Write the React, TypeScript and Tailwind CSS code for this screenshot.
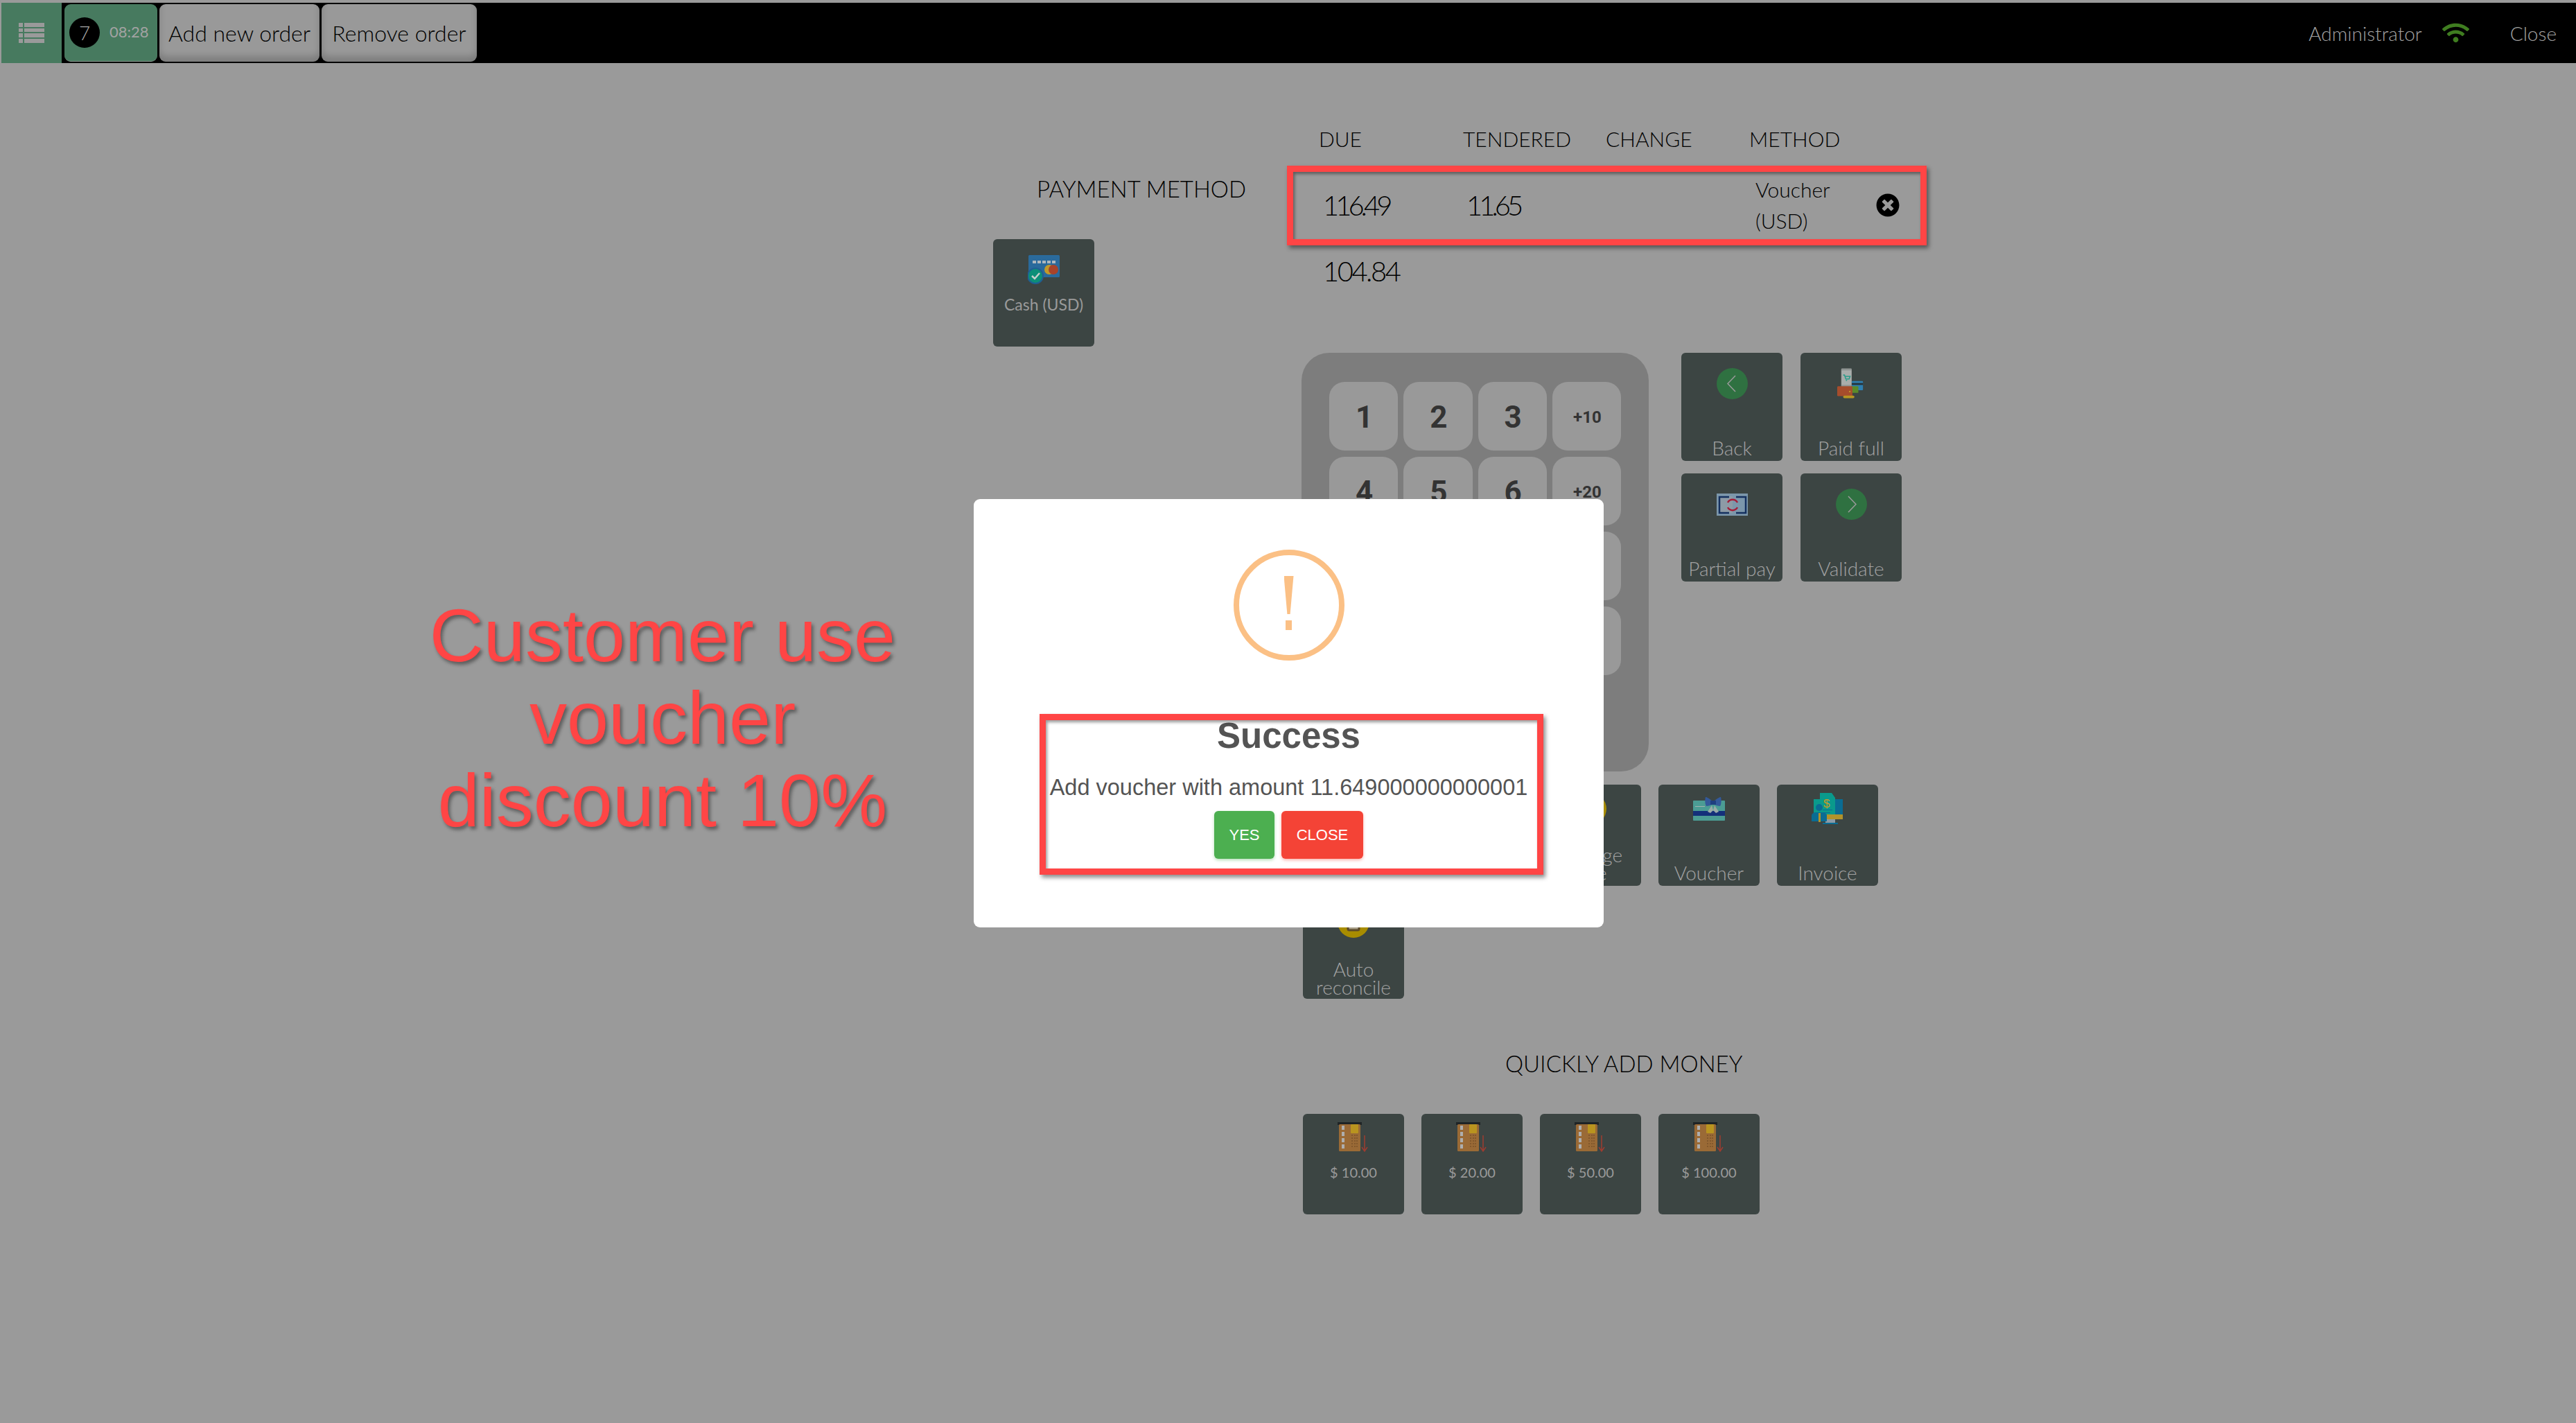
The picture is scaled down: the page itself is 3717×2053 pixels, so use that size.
import React from "react";
import { FaTimesCircle, FaWifi } from "react-icons/fa";

const CardCheck = () => (
  <svg width="46" height="42" viewBox="0 0 46 42">
    <rect x="1" y="0" width="45" height="32" rx="1.5" fill="#2a6a9c" />
    <rect x="7" y="8" width="5" height="4" fill="#aeb7bd" />
    <rect x="14" y="8" width="5" height="4" fill="#aeb7bd" />
    <rect x="21" y="8" width="5" height="4" fill="#aeb7bd" />
    <rect x="28" y="8" width="5" height="4" fill="#aeb7bd" />
    <rect x="35" y="8" width="5" height="4" fill="#aeb7bd" />
    <circle cx="31" cy="21" r="7" fill="#c29a2a" />
    <circle cx="37" cy="21" r="7" fill="#a8432a" />
    <circle cx="11" cy="30" r="12" fill="#1f5f93" />
    <circle cx="11" cy="30" r="10" fill="#0d8f78" />
    <path d="M6 30l4 4 7-8" stroke="#c8d0cc" strokeWidth="2.5" fill="none" />
  </svg>
);

const PaidFull = () => (
  <svg width="40" height="45" viewBox="0 0 42 46">
    <rect x="6" y="0" width="16" height="29" rx="1.5" fill="#8f9492" />
    <rect x="6.5" y="3" width="15" height="22" fill="#a9adab" />
    <path d="M9 10h2l2 6h5l1.5-4H11.5" stroke="#2a9c8a" strokeWidth="1.6" fill="none" />
    <circle cx="14" cy="18" r="1" fill="#2a9c8a" />
    <rect x="22" y="19" width="17" height="14" rx="1" fill="#2f7fb0" />
    <rect x="22" y="22" width="17" height="3" fill="#26343a" />
    <rect x="21" y="27" width="11" height="10" rx="1" fill="#5b8a2a" />
    <rect x="0" y="27" width="23" height="15" rx="1.5" fill="#a64d2c" />
    <circle cx="19" cy="35" r="1.2" fill="#c29a2a" />
    <rect x="9" y="41" width="17" height="4" rx="2" fill="#b79622" />
  </svg>
);

const PartialIcon = () => (
  <svg width="45" height="32" viewBox="0 0 45 32" className="mt-[7px]">
    <rect width="45" height="32" fill="#7c97ab" />
    <rect x="4" y="4" width="19" height="24" fill="#8d9ba6" />
    <path d="M18 5H4v23h14M28 5h14v23H28" stroke="#14305f" strokeWidth="2.5" fill="none" />
    <path d="M16 13a8 8 0 0 1 14 0M30 20a8 8 0 0 1-14 0" stroke="#a51d38" strokeWidth="2.5" fill="none" />
  </svg>
);

const GreenCircle = ({ dir }: { dir: "left" | "right" }) => (
  <svg width="45" height="45" viewBox="0 0 45 45">
    <circle cx="22.5" cy="22.5" r="22.5" fill="#2f7141" />
    <path
      d={dir === "left" ? "M27 11L16 22.5 27 34" : "M18 11l11 11.500L18 34"}
      stroke="#9a9a9a"
      strokeWidth="1.5"
      fill="none"
    />
  </svg>
);

const GiftCard = () => (
  <svg width="46" height="35" viewBox="0 0 46 35" className="mt-[5px]">
    <rect x="0" y="6" width="46" height="29" rx="1" fill="#4b9c94" />
    <rect x="0" y="21" width="46" height="7" fill="#14307a" />
    <rect x="3" y="14" width="14" height="1" fill="#a4b4b0" />
    <path d="M29 8C22 1 18 1 18 1c-1 3-1 10 1 13 3 0 6-1 10-3 4 2 7 3 10 3 2-3 2-10 1-13 0 0-4 0-11 7z" fill="#33599a" />
    <rect x="25" y="6" width="8" height="6" fill="#1f3f80" />
    <path d="M27 13l-6 9 4 2 4-4zM31 13l6 9-4 2-4-4z" fill="#9aaaa8" />
  </svg>
);

const InvoiceIcon = () => (
  <svg width="46" height="46" viewBox="0 0 46 46">
    <rect x="30" y="9" width="15" height="26" fill="#0a6c93" />
    <path d="M3 9h9V0h17l5 7v25H3z" fill="#0a9a8c" />
    <text x="17" y="21" fontSize="17" fill="#c69a2a" fontFamily="Liberation Sans">$</text>
    <rect x="16" y="24" width="14" height="1" fill="#0a6c93" />
    <rect x="16" y="28" width="11" height="1" fill="#0a6c93" />
    <rect x="22" y="31" width="23" height="7" fill="#b1932b" />
    <rect x="20" y="38" width="14" height="6" fill="#8d9ba6" />
    <rect x="16" y="43" width="22" height="2" fill="#0a6c93" />
    <circle cx="11" cy="21" r="5" fill="#0a6c93" />
    <path d="M0 41V33c0-3 3-5 6-5h10c3 0 6 2 6 5v8z" fill="#0a6c93" />
    <rect x="10" y="29" width="3" height="13" fill="#b1932b" />
  </svg>
);

const Atm = () => (
  <svg width="46" height="44" viewBox="0 0 46 44">
    <rect x="0" y="0" width="35" height="4" fill="#1f2426" />
    <rect x="2" y="3" width="31" height="39" rx="1.5" fill="#9a6a36" />
    <rect x="6" y="5" width="4" height="6" fill="#aeaeae" />
    <rect x="6" y="14" width="4" height="6" fill="#aeaeae" />
    <rect x="6" y="23" width="4" height="6" fill="#aeaeae" />
    <rect x="6" y="32" width="4" height="6" fill="#aeaeae" />
    <rect x="19" y="3" width="11" height="13" rx="1" fill="#b9941f" />
    <path d="M21 18v20M25 18v20M28 18v20" stroke="#6b4723" strokeDasharray="2 2" />
    <path d="M39 19v23M35 36l4 6 4-6" stroke="#9e3c30" strokeWidth="1.5" fill="none" />
  </svg>
);

const CoinIcon = () => (
  <svg width="46" height="46" viewBox="0 0 46 46">
    <circle cx="23" cy="23" r="23" fill="#a88c00" />
    <rect x="15" y="17" width="16" height="18" rx="2" fill="#a9a08a" stroke="#5c4a2a" strokeWidth="3" />
  </svg>
);

const Tile = ({ icon, label, tall }: { icon?: React.ReactNode; label: React.ReactNode; tall?: boolean }) => (
  <div
    className={`flex flex-col items-center justify-between w-[146px] rounded-md bg-[#3c4543] text-[#a3a3a3] font-light text-[28px] leading-[26px] text-center pb-[6px] ${
      tall ? "h-[156px] pt-[22px]" : "h-[146px] pt-[12px]"
    }`}
  >
    <div className="flex justify-center">{icon}</div>
    <div>{label}</div>
  </div>
);

const MoneyTile = ({ amount }: { amount: string }) => (
  <div className="flex flex-col items-center w-[146px] h-[145px] rounded-md bg-[#3c4543] text-[#9a9a9a] font-normal text-[20px] leading-[26px] pt-[12px]">
    <Atm />
    <div className="mt-[15px]">{amount}</div>
  </div>
);

const Key = ({ label, small }: { label: string; small?: boolean }) => (
  <div
    className={`flex items-center justify-center h-[99px] pt-[2px] pl-[2px] rounded-[22px] bg-[#999999] text-[#333333] font-bold font-['Roboto',sans-serif] ${
      small ? "text-[24px]" : "text-[44px]"
    }`}
  >
    {label}
  </div>
);

const RedBox = ({ className }: { className: string }) => (
  <div
    className={`absolute border-[9px] border-[#ff4545] shadow-[3px_4px_6px_rgba(0,0,0,0.45),inset_2px_3px_4px_rgba(0,0,0,0.4)] pointer-events-none ${className}`}
  />
);

const TopButton = ({ label, width }: { label: string; width: string }) => (
  <div
    className={`flex items-center justify-center h-[83px] rounded-[9px] bg-[#999999] shadow-[inset_0_-8px_10px_rgba(0,0,0,0.18)] text-black font-light text-[32px] ${width}`}
  >
    {label}
  </div>
);

export default function App() {
  return (
    <div className="relative w-[3717px] h-[2053px] overflow-hidden bg-[#9a9a9a] pt-[4px] pl-[2px] font-['Lato',sans-serif]">
      {/* top bar */}
      <div className="flex items-center h-[87px] bg-black">
        <div className="flex items-center justify-center w-[87px] h-full bg-[#477a5f]">
          <svg width="37" height="29" viewBox="0 0 37 29" fill="#9a9a9a">
            <rect x="0" y="0" width="6" height="6" />
            <rect x="8" y="0" width="29" height="6" />
            <rect x="0" y="8" width="6" height="5" />
            <rect x="8" y="8" width="29" height="5" />
            <rect x="0" y="15" width="6" height="6" />
            <rect x="8" y="15" width="29" height="6" />
            <rect x="0" y="23" width="6" height="6" />
            <rect x="8" y="23" width="29" height="6" />
          </svg>
        </div>
        <div className="flex items-center gap-[14px] ml-[4px] h-[83px] w-[134px] pl-[7px] rounded-[9px] bg-[#477a5f] border-b border-[#8a9a90]">
          <div className="flex items-center justify-center w-[44px] h-[44px] rounded-full bg-black text-[#aaaaaa] font-light text-[28px]">
            7
          </div>
          <span className="text-[#a3a3a3] font-normal text-[22px] -mt-[3px]">08:28</span>
        </div>
        <div className="flex gap-[3px] ml-[3px]">
          <TopButton label="Add new order" width="w-[231px]" />
          <TopButton label="Remove order" width="w-[224px]" />
        </div>
        <div className="flex items-center ml-auto pr-[28px] text-[#a3a3a3] font-light text-[28px]">
          <span>Administrator</span>
          <FaWifi className="ml-[29px] text-[39px] text-[#3f7d20]" />
          <span className="ml-[59px]">Close</span>
        </div>
      </div>

      {/* main */}
      <div className="flex pl-[1431px]">
        {/* left column */}
        <div className="w-[445px] pt-[160px] shrink-0">
          <div className="pl-[63px] h-[42px] leading-[42px] text-[33px] font-light text-black whitespace-nowrap">
            PAYMENT METHOD
          </div>
          <div className="mt-[52px]">
            <div className="flex flex-col items-center w-[146px] h-[155px] rounded-md bg-[#3c4543] text-[#9a9a9a] font-normal text-[23px] leading-[30px] pt-[23px]">
              <CardCheck />
              <div className="mt-[14px]">Cash (USD)</div>
            </div>
          </div>
        </div>

        {/* right column */}
        <div className="w-[900px] shrink-0 pt-[88px]">
          <div className="grid grid-cols-[208px_206px_207px_200px] pl-[25px] h-[60px] text-[30px] leading-[43px] font-light text-black">
            <div>DUE</div>
            <div>TENDERED</div>
            <div>CHANGE</div>
            <div>METHOD</div>
          </div>

          <div className="relative grid grid-cols-[207px_417px_174px_50px] items-center pl-[31px] h-[113px] font-light text-black">
            <div className="text-[40px] tracking-[-5px]">116.49</div>
            <div className="text-[40px] tracking-[-5px]">11.65</div>
            <div className="text-[30px] leading-[45px]">
              Voucher
              <br />
              (USD)
            </div>
            <FaTimesCircle className="text-[34px] text-black" />
            <RedBox className="-left-[21px] top-0 w-[923px] h-[115px]" />
          </div>

          <div className="pl-[31px] h-[78px] flex items-center text-[40px] tracking-[-2.5px] font-light text-black">
            104.84
          </div>

          <div className="flex mt-[79px]">
            <div className="w-[501px] h-[604px] rounded-[40px] bg-[#7d7d7d] pt-[42px] px-[40px] shrink-0">
              <div className="grid grid-cols-4 gap-x-[8px] gap-y-[9px]">
                <Key label="1" />
                <Key label="2" />
                <Key label="3" />
                <Key label="+10" small />
                <Key label="4" />
                <Key label="5" />
                <Key label="6" />
                <Key label="+20" small />
                <Key label="7" />
                <Key label="8" />
                <Key label="9" />
                <Key label="+50" small />
                <Key label="C" />
                <Key label="0" />
                <Key label="." />
                <Key label="←" small />
              </div>
            </div>
            <div className="grid grid-cols-[146px_146px] gap-x-[26px] gap-y-[18px] ml-[47px] h-fit">
              <Tile tall icon={<GreenCircle dir="left" />} label="Back" />
              <Tile tall icon={<PaidFull />} label="Paid full" />
              <Tile tall icon={<PartialIcon />} label="Partial pay" />
              <Tile tall icon={<GreenCircle dir="right" />} label="Validate" />
            </div>
          </div>

          <div className="grid grid-cols-[repeat(5,146px)] gap-x-[25px] gap-y-[17px] mt-[19px] ml-[2px]">
            <Tile label="Customer" />
            <Tile label="Note" />
            <Tile
              icon={<CoinIcon />}
              label={
                <>
                  Change
                  <br />
                  rate
                </>
              }
            />
            <Tile icon={<GiftCard />} label="Voucher" />
            <Tile icon={<InvoiceIcon />} label="Invoice" />
            <Tile
              icon={<CoinIcon />}
              label={
                <div className="-mb-[2px]">
                  Auto
                  <br />
                  reconcile
                </div>
              }
            />
          </div>

          <div className="pl-[294px] mt-[72px] h-[42px] leading-[42px] text-[33px] font-light text-black whitespace-nowrap">
            QUICKLY ADD MONEY
          </div>
          <div className="flex gap-[25px] mt-[52px] ml-[2px]">
            <MoneyTile amount="$ 10.00" />
            <MoneyTile amount="$ 20.00" />
            <MoneyTile amount="$ 50.00" />
            <MoneyTile amount="$ 100.00" />
          </div>
        </div>
      </div>

      {/* annotation */}
      <div className="absolute left-[556px] top-[857px] w-[800px] text-center text-[108px] leading-[119px] text-[#ff4545] font-['Liberation_Sans',sans-serif] [text-shadow:3px_4px_5px_rgba(0,0,0,0.4)]">
        Customer use
        <br />
        voucher
        <br />
        discount 10%
      </div>

      {/* modal */}
      <div className="absolute left-[1405px] top-[720px] w-[909px] h-[618px] rounded-[9px] bg-white flex flex-col items-center pt-[73px] font-['Liberation_Sans',sans-serif]">
        <div className="relative flex items-start justify-center w-[160px] h-[160px] rounded-full border-[8px] border-[#fbc085]">
          <div className="mt-[30px] w-[14px] h-[55px] bg-[#fbc085] [clip-path:polygon(0_0,100%_0,65%_100%,35%_100%)]" />
          <div className="absolute top-[94px] w-[9px] h-[14px] bg-[#fbc085]" />
        </div>
        <div className="mt-[79px] text-[51px] leading-[60px] font-bold text-[#545454]">Success</div>
        <div className="mt-[22px] text-[32.5px] leading-[44px] text-[#545454] whitespace-nowrap">
          Add voucher with amount 11.649000000000001
        </div>
        <div className="flex gap-[10px] mt-[12px]">
          <div className="flex items-center justify-center w-[87px] h-[69px] rounded-[6px] bg-[#4caf50] text-white text-[22px] shadow-[0_2px_4px_rgba(76,175,80,0.4)]">
            YES
          </div>
          <div className="flex items-center justify-center w-[118px] h-[69px] rounded-[6px] bg-[#f44336] text-white text-[22px] shadow-[0_2px_4px_rgba(244,67,54,0.4)]">
            CLOSE
          </div>
        </div>
        <RedBox className="left-[95px] top-[310px] w-[727px] h-[232px]" />
      </div>
    </div>
  );
}
